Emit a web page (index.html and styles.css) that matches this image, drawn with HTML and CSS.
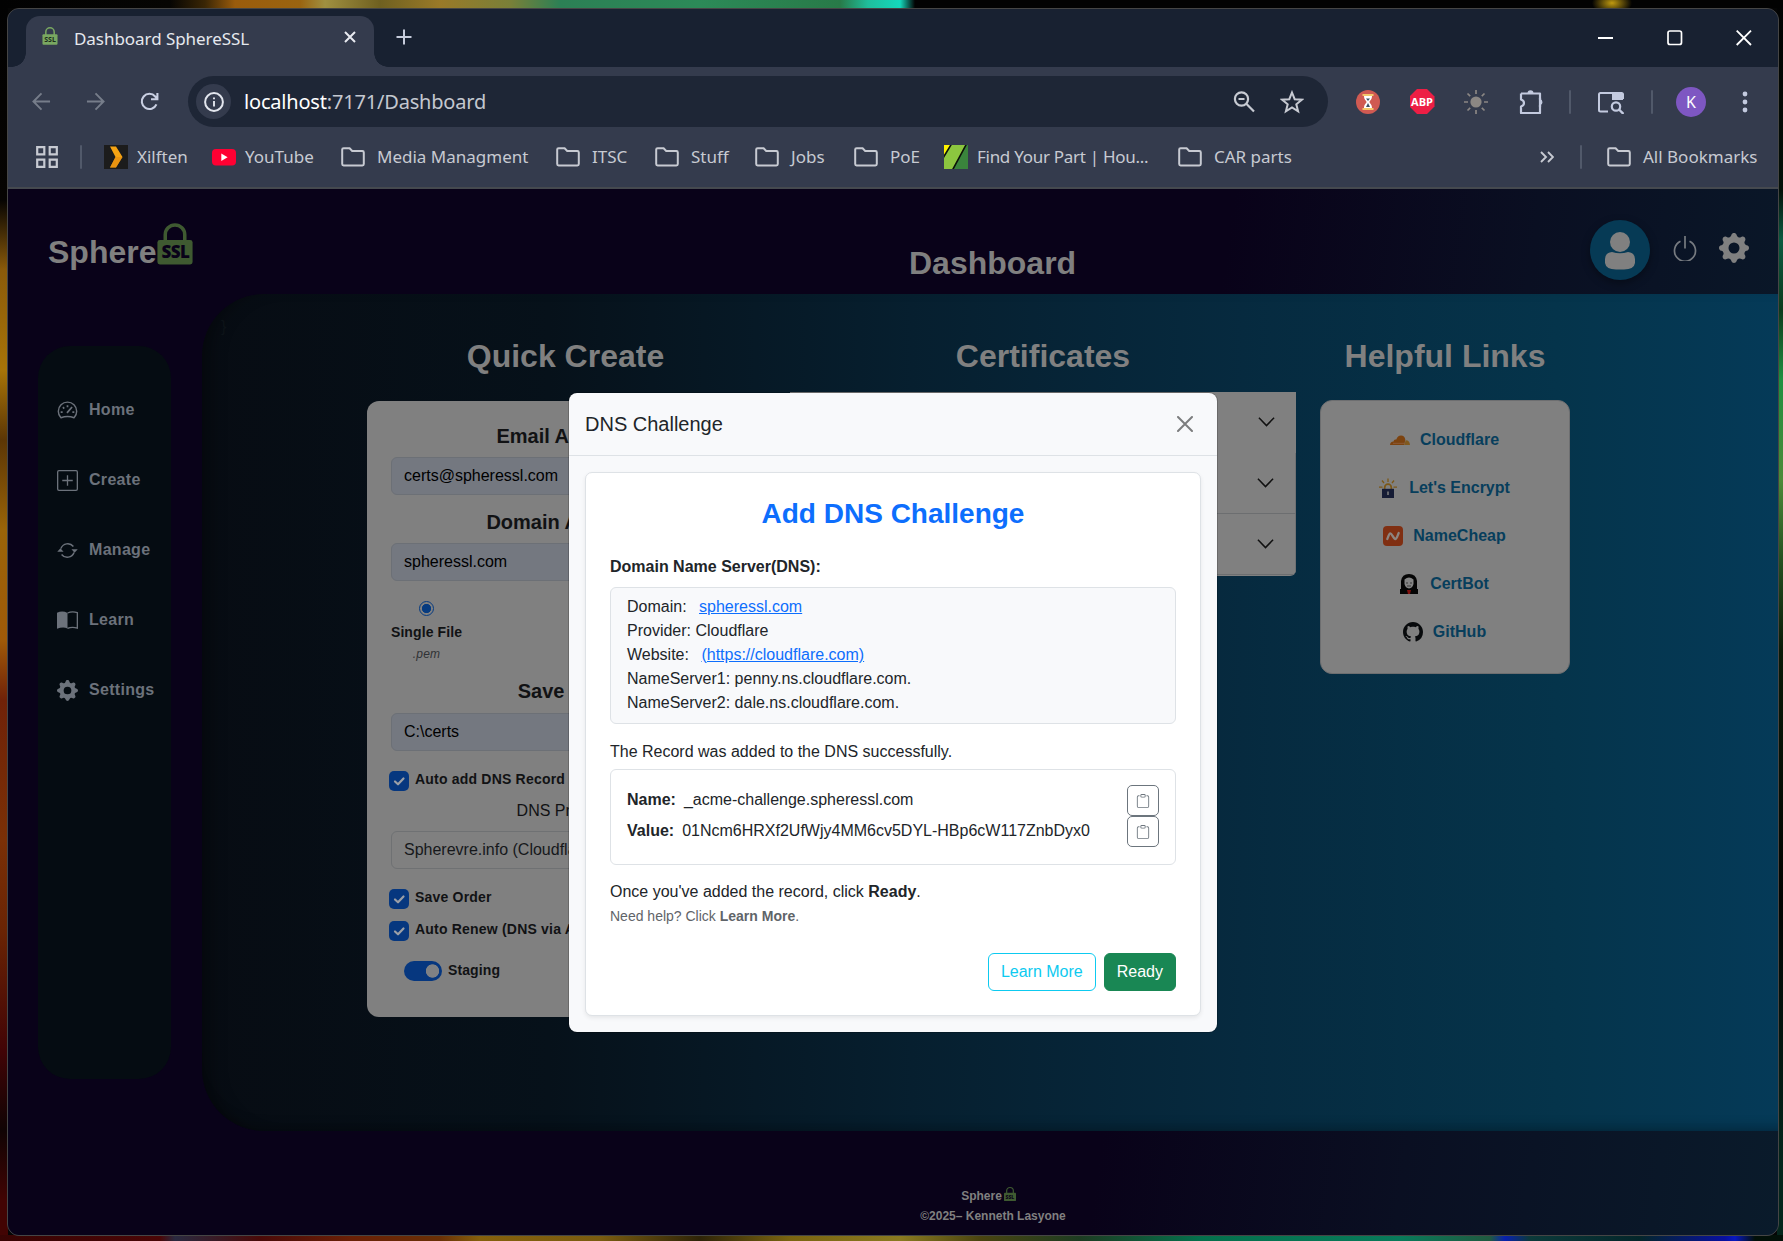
FILE: index.html
```html
<!DOCTYPE html>
<html lang="en">
<head>
<meta charset="utf-8">
<title>Dashboard SphereSSL</title>
<link rel="stylesheet" href="styles.css">
</head>
<body>
<svg width="0" height="0" class="defs" aria-hidden="true">
  <symbol id="folder" viewBox="0 0 24 20"><path d="M1.2 2.6Q1.2 1.2 2.6 1.2H8.6L11.2 4H21.4Q22.8 4 22.8 5.4V17Q22.8 18.4 21.4 18.4H2.6Q1.2 18.4 1.2 17Z" fill="none" stroke="currentColor" stroke-width="2"/></symbol>
  <symbol id="lock" viewBox="0 0 36 43"><path d="M8 20V12a10 10 0 0 1 20 0V20" fill="none" stroke="currentColor" stroke-width="3.6"/><rect y="17.500" width="36" height="25" rx="2.500" fill="currentColor"/></symbol>
  <symbol id="gear" viewBox="0 0 16 16"><path fill="currentColor" d="M9.405 1.050c-.413-1.400-2.397-1.400-2.810 0l-.1.340a1.464 1.464 0 0 1-2.105.872l-.310-.170c-1.283-.698-2.686.705-1.987 1.987l.169.311c.446.820.023 1.841-.872 2.105l-.340.100c-1.400.413-1.400 2.397 0 2.810l.340.100a1.464 1.464 0 0 1 .872 2.105l-.170.310c-.698 1.283.705 2.686 1.987 1.987l.311-.169a1.464 1.464 0 0 1 2.105.872l.100.340c.413 1.400 2.397 1.400 2.810 0l.100-.340a1.464 1.464 0 0 1 2.105-.872l.310.170c1.283.698 2.686-.705 1.987-1.987l-.169-.311a1.464 1.464 0 0 1 .872-2.105l.340-.100c1.400-.413 1.400-2.397 0-2.810l-.340-.100a1.464 1.464 0 0 1-.872-2.105l.170-.310c.698-1.283-.705-2.686-1.987-1.987l-.311.169a1.464 1.464 0 0 1-2.105-.872zM8 10.930a2.929 2.929 0 1 1 0-5.860 2.929 2.929 0 0 1 0 5.858z"/></symbol>
  <symbol id="clip" viewBox="0 0 16 16"><path fill="currentColor" d="M4 1.500H3a2 2 0 0 0-2 2V14a2 2 0 0 0 2 2h10a2 2 0 0 0 2-2V3.500a2 2 0 0 0-2-2h-1v1h1a1 1 0 0 1 1 1V14a1 1 0 0 1-1 1H3a1 1 0 0 1-1-1V3.500a1 1 0 0 1 1-1h1z"/><path fill="currentColor" d="M9.500 1a.5.5 0 0 1 .5.5v1a.5.5 0 0 1-.5.5h-3a.5.5 0 0 1-.5-.5v-1a.5.5 0 0 1 .5-.5zm-3-1A1.500 1.500 0 0 0 5 1.500v1A1.500 1.500 0 0 0 6.500 4h3A1.500 1.500 0 0 0 11 2.500v-1A1.500 1.500 0 0 0 9.500 0z"/></symbol>
  <symbol id="chev" viewBox="0 0 18 12"><path d="M1 1.500L9 9.800L17 1.500" fill="none" stroke="currentColor" stroke-width="1.600"/></symbol>
</svg>

<div class="window">
  <div class="tabstrip">
    <div class="tab">
      <span class="lockmark tiny"><svg><use href="#lock"/></svg><b>SSL</b></span>
      <span class="tab-title">Dashboard SphereSSL</span>
      <svg class="tab-close" viewBox="0 0 12 12"><path d="M1 1L11 11M11 1L1 11" stroke="#e8eaf0" stroke-width="2"/></svg>
    </div>
    <svg class="newtab" viewBox="0 0 16 16"><path d="M8 .5V15.500M.5 8H15.500" stroke="#c5cbdb" stroke-width="2"/></svg>
    <div class="winbtns">
      <svg viewBox="0 0 16 16"><path d="M0 8H15" stroke="#fff" stroke-width="2"/></svg>
      <svg viewBox="0 0 16 16"><rect x="1" y="1" width="13.500" height="13.500" rx="2" fill="none" stroke="#fff" stroke-width="1.700"/></svg>
      <svg viewBox="0 0 16 16"><path d="M.7 .7L15 15M15 .7L.7 15" stroke="#fff" stroke-width="1.800"/></svg>
    </div>
  </div>

  <div class="toolbar">
    <div class="navbtns">
      <svg viewBox="0 0 20 20"><path d="M19 10H2M10 1.500L1.500 10L10 18.500" fill="none" stroke="#767d8a" stroke-width="2"/></svg>
      <svg viewBox="0 0 20 20"><path d="M1 10H18M10 1.500L18.500 10L10 18.500" fill="none" stroke="#767d8a" stroke-width="2"/></svg>
      <svg viewBox="0 0 20 20"><path d="M17.300 13A8 8 0 1 1 16 4.700L18 7M18.300 1V7.600H11.600" fill="none" stroke="#c9cfe2" stroke-width="2.200"/></svg>
    </div>
    <div class="omnibox">
      <span class="info"><svg viewBox="0 0 20 20"><circle cx="10" cy="10" r="8.900" fill="none" stroke="#e3e6ee" stroke-width="2"/><path d="M10 9V14.600M10 5.400V7.200" stroke="#e3e6ee" stroke-width="1.900"/></svg></span>
      <span class="url"><b>localhost</b>:7171/Dashboard</span>
      <svg class="omni-icon" viewBox="0 0 22 22"><circle cx="8.500" cy="8" r="6.600" fill="none" stroke="#c7cad2" stroke-width="2.200"/><path d="M5.500 8H11.500M13.300 12.700L21 20.500" stroke="#c7cad2" stroke-width="2.200"/></svg>
      <svg class="omni-icon star" viewBox="0 0 24 24"><path d="M12 2.500L14.700 9.200L21.800 9.700L16.300 14.300L18.100 21.300L12 17.400L5.900 21.300L7.700 14.300L2.200 9.700L9.300 9.200Z" fill="none" stroke="#c7cad2" stroke-width="2"/></svg>
    </div>
    <div class="exts">
      <svg viewBox="0 0 24 24"><circle cx="12" cy="12" r="12" fill="#d05a52"/><path d="M6.500 5H17.500M6.500 19H17.500" stroke="#f3c66b" stroke-width="1.800"/><path d="M8 6H16C16 10 13.500 10.500 13.500 12C13.500 13.500 16 14 16 18H8C8 14 10.500 13.500 10.500 12C10.500 10.500 8 10 8 6Z" fill="#fff"/><path d="M10 8.500H14L12 11ZM12 13L14 17H10Z" fill="#3c5068"/></svg>
      <span class="abp">ABP</span>
      <svg viewBox="0 0 24 24"><circle cx="12" cy="12" r="5.600" fill="#8b8784"/><path d="M12 0V4M12 20V24M0 12H4M20 12H24M3.500 3.500L6.200 6.200M17.800 17.800L20.500 20.500M20.500 3.500L17.800 6.200M6.200 17.800L3.500 20.500" stroke="#8b8784" stroke-width="1.700"/></svg>
      <svg viewBox="0 0 24 24"><path d="M2 3.500H21V9.500M21 15V23H2V16.500Q5 15.500 5 13T2 9.500V3.500" fill="none" stroke="#c3cadf" stroke-width="2.200" stroke-linejoin="round"/><path d="M8.500 3.500a3 3.200 0 0 1 6 0zM21 9a3 3.300 0 0 1 0 6.500z" fill="#c3cadf"/><path d="M21 8V17" stroke="#c3cadf" stroke-width="2.200"/></svg>
      <i class="vsep"></i>
      <svg class="wide" viewBox="0 0 26 24"><path d="M10 21.500H2.500Q1 21.500 1 20V4.500Q1 3 2.500 3H23.500Q25 3 25 4.500V9" fill="none" stroke="#c3cadf" stroke-width="2"/><path d="M14 3H25V10H14Z" fill="#c3cadf"/><circle cx="18" cy="16.500" r="4.200" fill="none" stroke="#c3cadf" stroke-width="2.200"/><path d="M21 19.500L25.500 24" stroke="#c3cadf" stroke-width="2.400"/></svg>
      <i class="vsep"></i>
      <span class="profile">K</span>
      <svg class="dots" viewBox="0 0 6 22"><circle cx="3" cy="3" r="2.400"/><circle cx="3" cy="11" r="2.400"/><circle cx="3" cy="19" r="2.400"/></svg>
    </div>
  </div>

  <div class="bookmarks">
    <svg class="apps" viewBox="0 0 22 22"><path d="M1.200 1.200H8.300V8.300H1.200ZM13.700 1.200H20.800V8.300H13.700ZM1.200 13.700H8.300V20.800H1.200ZM13.700 13.700H20.800V20.800H13.700Z" fill="none" stroke="#c7cad2" stroke-width="2.200"/></svg>
    <i class="vsep"></i>
    <div class="bm xil"><svg viewBox="0 0 24 24"><rect width="24" height="24" fill="#1c1c1c"/><path d="M6 1.500H12L18.500 12L12 22.500H6L11.500 12Z" fill="#f5a313"/><path d="M11.500 12H18.500L12 22.500H6Z" fill="#e38b10" opacity=".6"/></svg><span>Xilften</span></div>
    <div class="bm yt"><svg viewBox="0 0 24 24"><rect y="4" width="24" height="16.500" rx="4" fill="#ff0033"/><path d="M9.300 8.500L15.600 12.200L9.300 15.900Z" fill="#fff"/></svg><span>YouTube</span></div>
    <div class="bm media f"><svg><use href="#folder"/></svg><span>Media Managment</span></div>
    <div class="bm itsc f"><svg><use href="#folder"/></svg><span>ITSC</span></div>
    <div class="bm stuff f"><svg><use href="#folder"/></svg><span>Stuff</span></div>
    <div class="bm jobs f"><svg><use href="#folder"/></svg><span>Jobs</span></div>
    <div class="bm poe f"><svg><use href="#folder"/></svg><span>PoE</span></div>
    <div class="bm find"><svg viewBox="0 0 24 24"><path d="M0 0H24V24H0Z" fill="#8cc63f"/><path d="M0 0H7L0 12Z" fill="#fff200"/><path d="M22 0H24V24H9Z" fill="#3a843c"/><path d="M7.500 -1L-1 13M22.500 -1L8.500 25" stroke="#0b1208" stroke-width="1.600"/></svg><span>Find Your Part | Hou...</span></div>
    <div class="bm car f"><svg><use href="#folder"/></svg><span>CAR parts</span></div>
    <svg class="more" viewBox="0 0 14 12"><path d="M1 1L6 6L1 11M8 1L13 6L8 11" fill="none" stroke="#c7cad2" stroke-width="1.900"/></svg>
    <i class="vsep"></i>
    <div class="bm all f"><svg><use href="#folder"/></svg><span>All Bookmarks</span></div>
  </div>

  <div class="page">
    <header class="header">
      <div class="brand"><span>Sphere</span><span class="lockmark big"><svg><use href="#lock"/></svg><b>SSL</b></span></div>
      <h1>Dashboard</h1>
      <div class="header-actions">
        <span class="avatar"><svg viewBox="0 0 60 60"><ellipse cx="30" cy="22" rx="10" ry="10"/><path d="M22 32Q30 34.500 38 32Q45 33 45 39V43Q44 49.500 34 49.500H26Q16 49.500 15 43V39Q15 33 22 32Z"/></svg></span>
        <svg class="power" viewBox="0 0 24 26"><path d="M7.500 6.300A10.500 10.500 0 1 0 16.500 6.300M12 1V13.500" fill="none" stroke="currentColor" stroke-width="1.700"/></svg>
        <svg class="cog"><use href="#gear"/></svg>
      </div>
    </header>

    <div class="body-row">
      <nav class="sidebar">
        <a><svg viewBox="0 0 16 16"><path d="M3 13.500A7 7 0 1 1 13 13.500Q8 11.500 3 13.500Z" fill="none" stroke="currentColor" stroke-width="1.100"/><path d="M8 4V5.500M4.500 5.500L5.500 6.500M2.800 9.300H4.300M11.700 9.300H13.200M7.600 9.800L11.500 5.300" fill="none" stroke="currentColor" stroke-width="1.300"/></svg><span>Home</span></a>
        <a><svg viewBox="0 0 16 16"><rect x=".5" y=".5" width="15" height="15" rx="1" fill="none" stroke="currentColor"/><path d="M8 4V12M4 8H12" stroke="currentColor"/></svg><span>Create</span></a>
        <a><svg viewBox="0 0 16 16"><path d="M3 6.500A5.500 5.500 0 0 1 12.500 5M13 9.500A5.500 5.500 0 0 1 3.500 11" fill="none" stroke="currentColor" stroke-width="1.100"/><path d="M11 7H15.800L13.400 9.800ZM.2 9H5L2.600 6.200Z" fill="currentColor"/></svg><span>Manage</span></a>
        <a><svg viewBox="0 0 16 16"><path d="M0 2Q4.500 .3 8 2.300V14Q4.500 12.500 0 14.300Z" fill="currentColor"/><path d="M8 2.300Q11.500 .7 15.500 2V13.800Q11.500 12.500 8 14" fill="none" stroke="currentColor"/></svg><span>Learn</span></a>
        <a><svg><use href="#gear"/></svg><span>Settings</span></a>
      </nav>

      <main class="panel">
        <span class="stray">}</span>
        <section class="col quick">
          <h2>Quick Create</h2>
          <div class="card form">
            <h4>Email Address</h4>
            <div class="input">certs@spheressl.com</div>
            <h4 class="mt">Domain Address</h4>
            <div class="input">spheressl.com</div>
            <div class="radio"><i></i><b>Single File</b><em>.pem</em></div>
            <h4 class="save">Save Path</h4>
            <div class="input">C:\certs</div>
            <div class="check c1"><i><svg viewBox="0 0 20 20"><path d="M6 10.500L9 13.300L14.500 7.500"/></svg></i><b>Auto add DNS Record</b></div>
            <div class="provider">DNS Provider</div>
            <div class="input select">Spherevre.info (Cloudflare)</div>
            <div class="check c2"><i><svg viewBox="0 0 20 20"><path d="M6 10.500L9 13.300L14.500 7.500"/></svg></i><b>Save Order</b></div>
            <div class="check c3"><i><svg viewBox="0 0 20 20"><path d="M6 10.500L9 13.300L14.500 7.500"/></svg></i><b>Auto Renew (DNS via API)</b></div>
            <div class="switch"><i></i><b>Staging</b></div>
          </div>
        </section>
        <section class="col certs">
          <h2>Certificates</h2>
          <div class="accordion">
            <div><svg><use href="#chev"/></svg></div>
            <div><svg><use href="#chev"/></svg></div>
            <div><svg><use href="#chev"/></svg></div>
          </div>
        </section>
        <section class="col links">
          <h2>Helpful Links</h2>
          <div class="card linklist">
            <a><svg viewBox="0 0 20 20"><path d="M0 15Q.2 11.800 3.500 11.500Q3.800 9 6.300 9.600Q7.600 5.500 11 5.500Q14.600 5.700 15.300 9.500L14.300 15Z" fill="#7c4310"/><path d="M14.300 15L15.600 10.200Q19.600 10 20 15Z" fill="#80591f"/><path d="M3 13.300H14.500" stroke="#946647" stroke-width=".7"/></svg><span>Cloudflare</span></a>
            <a class="le"><svg viewBox="0 0 18 20"><path d="M9 .5V4M3 2.500L5 5M15 2.500L13 5M0 9.200H3.500M14.500 9.200H18" stroke="#7c5716" stroke-width="1.300"/><path d="M5.700 11V9.500a3.300 3.300 0 0 1 6.600 0V11" fill="none" stroke="#7c5716" stroke-width="1.700"/><path d="M3 10.800H15V20H3Z" fill="#161c35"/><path d="M9 13.500V17" stroke="#808080" stroke-width="1.500"/></svg><span>Let's Encrypt</span></a>
            <a><svg viewBox="0 0 20 20"><rect width="20" height="20" rx="4" fill="#802f12"/><path d="M4.300 13C5.500 10.500 6 7.300 7.300 7.300C8.800 7.300 10.500 13 12.300 13C13.800 13 14.500 9.500 15.700 7" fill="none" stroke="#8d8580" stroke-width="2.300" stroke-linecap="round"/></svg><span>NameCheap</span></a>
            <a class="cb"><svg viewBox="0 0 18 20"><path d="M1 20V7Q2 0 9 0T17 7V20Z" fill="#050505"/><path d="M4.500 5.500Q9 1.500 13.500 5.500V10Q12.500 14 9 14.500Q5.500 14 4.500 10Z" fill="#858585"/><path d="M6 9H8M10 9H12M7 12H11" stroke="#333" stroke-width=".9"/><path d="M0 15H18V20H0Z" fill="#050505"/><path d="M7 16H11L10 20H8Z" fill="#80100e"/></svg><span>CertBot</span></a>
            <a><svg viewBox="0 0 16 16"><path fill="#080a0c" d="M8 0C3.580 0 0 3.580 0 8c0 3.540 2.290 6.530 5.470 7.590.4.070.55-.17.55-.38 0-.19-.01-.82-.01-1.490-2.010.37-2.530-.49-2.690-.94-.09-.23-.48-.94-.82-1.130-.28-.15-.68-.52-.01-.53.63-.01 1.080.58 1.230.82.72 1.210 1.870.87 2.330.66.07-.52.28-.87.51-1.070-1.780-.2-3.640-.89-3.640-3.950 0-.87.31-1.590.82-2.150-.08-.2-.36-1.020.08-2.120 0 0 .67-.21 2.200.82.64-.18 1.320-.27 2-.27s1.360.09 2 .27c1.530-1.040 2.200-.82 2.200-.82.44 1.100.16 1.920.08 2.120.51.56.82 1.270.82 2.150 0 3.070-1.870 3.750-3.650 3.950.29.25.54.73.54 1.480 0 1.070-.01 1.930-.01 2.200 0 .21.15.46.55.38A8.010 8.010 0 0 0 16 8c0-4.420-3.580-8-8-8"/></svg><span>GitHub</span></a>
          </div>
        </section>
      </main>
    </div>

    <footer class="footer">
      <div class="brand-sm"><span>Sphere</span><span class="lockmark mini"><svg><use href="#lock"/></svg><b>SSL</b></span></div>
      <div>©2025– Kenneth Lasyone</div>
    </footer>

    <div class="modal">
      <div class="modal-head"><span>DNS Challenge</span><svg viewBox="0 0 16 16"><path d="M1 1L15 15M15 1L1 15" stroke="#7c7d7e" stroke-width="2" stroke-linecap="round"/></svg></div>
      <div class="modal-card">
        <h3>Add DNS Challenge</h3>
        <strong class="lbl">Domain Name Server(DNS):</strong>
        <div class="dns">
          <div>Domain: <a class="l1">spheressl.com</a></div>
          <div>Provider: Cloudflare</div>
          <div>Website: <a class="l2">(https://cloudflare.com)</a></div>
          <div>NameServer1: penny.ns.cloudflare.com.</div>
          <div>NameServer2: dale.ns.cloudflare.com.</div>
        </div>
        <p class="added">The Record was added to the DNS successfully.</p>
        <div class="record">
          <div><span><b>Name:</b>_acme-challenge.spheressl.com</span><button><svg><use href="#clip"/></svg></button></div>
          <div><span><b>Value:</b>01Ncm6HRXf2UfWjy4MM6cv5DYL-HBp6cW117ZnbDyx0</span><button><svg><use href="#clip"/></svg></button></div>
        </div>
        <p class="once">Once you've added the record, click <b>Ready</b>.</p>
        <p class="help">Need help? Click <b>Learn More</b>.</p>
        <div class="actions"><button class="learn">Learn More</button><button class="ready">Ready</button></div>
      </div>
    </div>
  </div>
</div>
</body>
</html>
```
FILE: styles.css
```css
* { box-sizing: border-box; }
html, body { height: 100%; }
body {
  margin: 0;
  padding: 8px 4px 5px 7px;
  overflow: hidden;
  font: 16px/24px "Liberation Sans", Arial, sans-serif;
  color: #212529;
  background:
    radial-gradient(ellipse 20px 12px at 1612px 3px, #c09a10, transparent),
    linear-gradient(90deg, #020202 0, #060503 170px, #3a2605 205px, #9a5c0c 235px, #9a6410 300px, #a09040 325px, #6f6020 380px, #9a7a28 440px, #7a8038 510px, #2c8055 560px, #2c8a58 700px, #287a48 840px, #1fbe9c 868px, #14d8bc 900px, #020202 915px, #020202 1783px) 0 0 / 100% 8px no-repeat,
    linear-gradient(90deg, #380403 0, #4a0606 160px, #2a2a40 175px, #4a0a08 260px, #6a2006 350px, #6a3006 440px, #85600c 480px, #7a5c10 600px, #2e2408 700px, #7a6410 790px, #8a7a20 900px, #4a4410 980px, #1d3c22 1080px, #04704c 1200px, #087a5a 1400px, #205a40 1490px, #0820b0 1505px, #0c3a3a 1530px, #04262a 1640px, #0810a0 1725px, #0818c0 1735px, #021008 1755px) 0 100% / 100% 6px no-repeat,
    linear-gradient(180deg, #020202 0, #060402 200px, #8a5a0a 270px, #a87408 370px, #5c3605 440px, #9a6408 530px, #a05a08 640px, #702208 700px, #7a3006 840px, #6a2404 930px, #420406 1050px, #100404 1130px, #420403 1200px) 0 0 / 8px 100% no-repeat,
    linear-gradient(180deg, #020202 0, #041009 190px, #0a5a40 240px, #0c3a1c 310px, #1f9040 380px, #4c8a38 480px, #245020 560px, #0a1a08 650px, #020503 900px, #04261c 1170px) 100% 0 / 6px 100% no-repeat,
    #050505;
}
h1, h2, h3, h4, p { margin: 0; }
svg { display: block; flex: none; }
.defs { position: absolute; }

.window {
  height: 1228px;
  display: flex;
  flex-direction: column;
  border: 1px solid #454545;
  border-radius: 12px;
  overflow: hidden;
  background: #343b4d;
}

/* Browser chrome */
.tabstrip {
  flex: 0 0 58px;
  display: flex;
  align-items: flex-start;
  padding: 7px 26px 0 18px;
  background: #182131;
  font-family: "Noto Sans", sans-serif;
}
.tab {
  position: relative;
  width: 348px;
  height: 51px;
  display: flex;
  align-items: center;
  padding: 0 18px 9px 16px;
  border-radius: 14px 14px 0 0;
  background: #343b4d;
}
.tab::before, .tab::after {
  content: "";
  position: absolute;
  bottom: 0;
  width: 14px;
  height: 14px;
}
.tab::before { left: -14px; background: radial-gradient(circle at 0 0, transparent 13.500px, #343b4d 14px); }
.tab::after { right: -14px; background: radial-gradient(circle at 100% 0, transparent 13.500px, #343b4d 14px); }
.tab-title { flex: 1; margin-left: 16px; padding-top: 3px; font-size: 17px; letter-spacing: -.05px; color: #e6e8ee; white-space: nowrap; }
.tab-close { width: 12px; height: 12px; }
.newtab { width: 16px; height: 16px; margin: 13px 0 0 22px; }
.winbtns { flex: 1; display: flex; justify-content: flex-end; gap: 53px; padding-top: 14px; }
.winbtns svg { width: 16px; height: 16px; }

.toolbar {
  flex: 0 0 60px;
  display: flex;
  align-items: center;
  padding: 9px 0 0 24px;
  font-family: "Noto Sans", sans-serif;
}
.navbtns { display: flex; gap: 35px; width: 156px; }
.navbtns svg { width: 19px; height: 19px; }
.omnibox {
  width: 1140px;
  height: 51px;
  display: flex;
  align-items: center;
  padding: 0 24px 0 8px;
  border-radius: 26px;
  background: #1e2636;
}
.info { width: 35px; height: 35px; display: grid; place-items: center; border-radius: 50%; background: #343b4d; }
.info svg { width: 20px; height: 20px; }
.url { flex: 1; margin-left: 13px; font-size: 20px; letter-spacing: -.19px; color: #c4c8d0; }
.url b { font-weight: 400; color: #fff; }
.omni-icon { width: 22px; height: 22px; }
.star { width: 24px; height: 24px; margin-left: 25px; }
.exts { flex: 1; display: grid; grid-template-columns: 54px 54px 54px 56px 21px 62px 19px 60px 47px; justify-items: center; align-items: center; padding-left: 13px; }
.exts svg { width: 24px; height: 24px; }
.exts .wide { width: 26px; }
.exts .dots { width: 6px; height: 22px; fill: #c3cadf; }
.vsep { width: 2px; height: 24px; border-radius: 1px; background: #51596a; }
.abp {
  width: 25px; height: 25px;
  background: #ed1e45;
  clip-path: polygon(30% 0, 70% 0, 100% 30%, 100% 70%, 70% 100%, 30% 100%, 0 70%, 0 30%);
  color: #fff;
  font: 700 11px/25px "Open Sans", sans-serif;
  text-align: center;
}
.profile { width: 30px; height: 30px; border-radius: 50%; background: #7e57c2; color: #fff; font-size: 16px; line-height: 30px; text-align: center; }

.bookmarks {
  flex: 0 0 62px;
  display: flex;
  align-items: center;
  padding: 0 0 0 28px;
  border-bottom: 2px solid #45494f;
  font: 17px/24px "Noto Sans", sans-serif;
  color: #c7cad2;
}
.apps { width: 22px; height: 22px; margin-right: 22px; }
.bm { display: flex; align-items: center; white-space: nowrap; }
.bm svg { width: 24px; height: 24px; margin-right: 9px; }
.bm.f svg { height: 20px; margin-right: 12px; }
.xil { width: 108px; margin-left: 22px; }
.yt { width: 129px; }
.media { width: 215px; }
.itsc { width: 99px; }
.stuff { width: 100px; }
.jobs { width: 99px; }
.poe { width: 90px; }
.find { width: 234px; letter-spacing: -.28px; }
.car { width: 362px; }
.more { width: 14px; height: 14px; margin-right: 26px; }
.all { margin-left: 25px; }

/* Application */
.page {
  position: relative;
  flex: 1;
  display: flex;
  flex-direction: column;
  background: linear-gradient(98deg, #090219 0, #090219 64%, #0a0f22 80%, #0a1b2b 100%);
}
.header { flex: 0 0 105px; display: flex; padding-left: 40px; color: #808080; }
.header h1 { width: 681px; margin-top: 55px; font-size: 32px; line-height: 38px; }
.brand { width: 861px; display: flex; padding-top: 34px; font: 700 32px/37px "Liberation Sans", Arial, sans-serif; }
.brand > span:first-child { padding-top: 11px; }
.lockmark { position: relative; display: block; color: #3f5a31; }
.lockmark svg { width: 100%; height: 100%; }
.lockmark b { position: absolute; left: 0; right: 0; text-align: center; color: #090219; font-family: "Noto Sans", sans-serif; }
.big { width: 36px; height: 42px; margin-left: 1px; }
.big b { bottom: 3px; font-size: 17px; line-height: 20px; letter-spacing: -.5px; }
.tiny { width: 16px; height: 18px; margin-top: -2px; color: #79a861; }
.tiny b { bottom: 0; font-size: 7px; line-height: 11px; color: #1b2b1b; }
.mini { width: 12px; height: 16px; margin-left: 2px; }
.mini b { bottom: 0; font-size: 5px; line-height: 10px; }
.header-actions { display: flex; align-items: flex-start; }
.avatar { width: 60px; height: 60px; margin-top: 31px; border-radius: 50%; background: #063a55; box-shadow: 0 3px 8px rgba(0,0,0,.35); fill: #808080; }
.power { width: 24px; height: 26px; margin: 46px 0 0 23px; color: #777b80; }
.cog { width: 30px; height: 30px; margin: 44px 0 0 22px; color: #808080; }

.body-row { flex: 0 0 837px; display: flex; align-items: flex-start; padding-left: 30px; }
.sidebar {
  width: 133px;
  height: 733px;
  margin-top: 52px;
  padding: 29px 0 0 19px;
  border-radius: 32px;
  background: #050c12;
  color: #6c727b;
  font-weight: 700;
}
.sidebar a { display: flex; align-items: center; height: 70px; gap: 11px; letter-spacing: .3px; }
.sidebar svg { width: 21px; height: 21px; }

.panel {
  flex: 1;
  height: 837px;
  margin-left: 31px;
  display: flex;
  position: relative;
  border-radius: 62px 0 0 62px;
  background: linear-gradient(90deg, #070c13 0, #06111a 22%, #061f2f 45%, #062a3f 66%, #05344b 86%, #053a58 100%);
  box-shadow: inset 18px 0 18px -12px rgba(0,0,0,.4), inset 0 -16px 14px -14px rgba(0,0,0,.3);
}
.stray { position: absolute; left: 19px; top: 21px; color: #0d1318; }
.col h2 { height: 37px; font-size: 32px; line-height: 37px; text-align: center; color: #808080; white-space: nowrap; }
.col { padding-top: 44px; }
.quick { width: 397px; margin-left: 165px; }
.certs { width: 506px; margin-left: 26px; }
.links { width: 250px; margin-left: 24px; }
.card { border-radius: 12px; background: #808080; }

.form { height: 616px; margin-top: 26px; padding: 24px 24px 0; color: #111214; }
.form h4 { height: 24px; margin-bottom: 8px; font-size: 20px; line-height: 23px; text-align: center; }
.input { height: 38px; padding: 6px 12px; border: 1px solid #6c7076; border-radius: 6px; background: #747880; color: #000; line-height: 23px; }
.form .mt { margin-top: 16px; }
.radio { display: flex; flex-direction: column; align-items: center; width: 71px; height: 99px; padding-top: 20px; }
.radio i { width: 15px; height: 15px; border-radius: 50%; border: 1.500px solid #063b80; background: radial-gradient(circle, #063b80 4.300px, #808080 5px); }
.radio b { margin-top: 4px; font-size: 14px; letter-spacing: .1px; white-space: nowrap; }
.radio em { font-size: 12px; line-height: 18px; letter-spacing: .2px; margin-top: 1px; color: #303235; }
.form .save { margin-bottom: 9px; }
.check { display: flex; gap: 6px; margin-left: -2px; height: 20px; font-size: 14px; line-height: 17px; letter-spacing: .2px; white-space: nowrap; }
.check i { width: 20px; height: 20px; border-radius: 5px; background: #06377f; }
.check path { fill: none; stroke: #9b9fa6; stroke-width: 2.200; stroke-linecap: round; stroke-linejoin: round; }
.c1 { margin-top: 20px; }
.provider { height: 24px; margin: 8px 0; text-align: center; }
.select { background: #808080; border-color: #6f7173; color: #16181b; overflow: hidden; white-space: nowrap; }
.c2 { margin-top: 20px; }
.c3 { margin-top: 12px; }
.switch { display: flex; gap: 6px; margin: 20px 0 0 13px; font-size: 14px; line-height: 18px; letter-spacing: .1px; }
.switch i { width: 38px; height: 20px; border-radius: 10px; background: radial-gradient(circle at 28.500px 10px, #7f8184 6.300px, #06377f 7px); }

.accordion { height: 184px; margin-top: 17px; border-radius: 0 0 6px 6px; background: #808080; overflow: hidden; }
.accordion div { height: 61px; display: flex; align-items: center; justify-content: flex-end; padding-right: 21px; border-right: 1px solid #707173; color: #111; }
.accordion div:first-child { border: 0; padding-bottom: 2px; }
.accordion div + div { border-bottom: 1px solid #6c6e70; }
.accordion svg { width: 17px; height: 12px; }

.linklist { height: 274px; margin-top: 25px; padding: 15px 1px 0 0; border: 1px solid #6d6e70; font-weight: 700; color: #073e5c; }
.linklist a { height: 48px; display: flex; align-items: center; justify-content: center; gap: 10px; }
.linklist svg { width: 20px; height: 20px; }
.linklist .le svg, .linklist .cb svg { width: 18px; }
.linklist .le, .linklist .cb { gap: 12px; }

.footer { margin-top: 55px; padding-left: 200px; text-align: center; font: 700 12px/20px "Liberation Sans", Arial, sans-serif; color: #808080; }
.brand-sm { display: flex; justify-content: center; align-items: flex-end; height: 20px; margin-right: 9px; }
.brand-sm .lockmark { margin-bottom: 4px; }

/* Dialog over the dimmed page */
.modal {
  position: absolute;
  left: 561px;
  top: 204px;
  width: 648px;
  height: 639px;
  border-radius: 8px;
  background: #f8f9fb;
  box-shadow: 0 0 0 1px rgba(0,0,0,.18);
}
.modal-head { height: 63px; display: flex; justify-content: space-between; align-items: center; padding: 0 24px 0 16px; border-bottom: 1px solid #dee2e6; font-size: 20px; }
.modal-head svg { width: 16px; height: 16px; }
.modal-card { height: 544px; margin: 16px 16px 0; padding: 24px; border: 1px solid #dee2e6; border-radius: 7px; background: #fff; box-shadow: 0 2px 4px rgba(0,0,0,.075); }
.modal-card h3 { height: 34px; color: #0d6efd; font-size: 28px; line-height: 33px; text-align: center; }
.lbl { display: block; margin-top: 24px; }
.dns { height: 137px; margin-top: 8px; padding: 7px 16px; border: 1px solid #dee2e6; border-radius: 6px; background: #f8f9fb; }
.dns a { color: #0d6efd; text-decoration: underline; }
.l1, .l2 { margin-left: 8px; }
.added { margin-top: 16px; }
.record { height: 96px; margin-top: 5px; padding: 15px 16px; border: 1px solid #dee2e6; border-radius: 6px; }
.record div { height: 31px; display: flex; justify-content: space-between; }
.record span { padding-top: 3px; }
.record b { margin-right: 8px; }
.record button { width: 32px; height: 31px; display: grid; place-items: center; padding: 0; border: 1px solid #6c757d; border-radius: 5px; background: #fff; color: #6c757d; }
.record svg { width: 14px; height: 14px; }
.once { margin-top: 15px; }
.help { font-size: 14px; color: #5f6469; }
.actions { display: flex; justify-content: flex-end; gap: 8px; margin-top: 25px; }
.actions button { height: 38px; padding: 0 12px; border-radius: 6px; font: 16px "Liberation Sans", Arial, sans-serif; white-space: nowrap; }
.learn { border: 1px solid #0dcaf0; background: #fff; color: #0dcaf0; }
.ready { border: 1px solid #198754; background: #198754; color: #fff; }
```
